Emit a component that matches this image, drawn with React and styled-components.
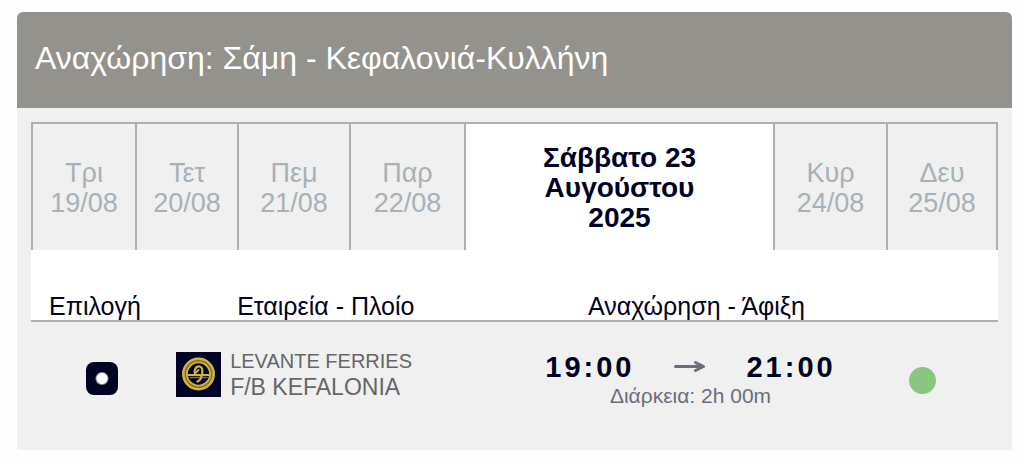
import React from "react";
import styled, { createGlobalStyle } from "styled-components";

const GlobalStyle = createGlobalStyle`
  * { box-sizing: border-box; }
  body {
    margin: 0;
    background: #fefefe;
    font-family: "Liberation Sans", Arial, sans-serif;
    color: #000323;
  }
`;

const Panel = styled.main`
  margin: 12px 12px 14px 17px;
  background: #f0f0f0;
  border-radius: 6px 6px 0 0;
  overflow: hidden;
`;

const Title = styled.h1`
  margin: 0;
  padding: 28px 18px 32px;
  background: #94928c;
  color: #fff;
  font-size: 32px;
  line-height: 36px;
  font-weight: 400;
`;

const Content = styled.div`
  padding: 14px 14px 0;
`;

const DayTabs = styled.nav`
  display: grid;
  grid-template-columns: 104fr 102fr 112fr 115fr 309fr 113fr 110fr;
  min-height: 128px;
  border-top: 2px solid #a8b0ba;
  border-left: 2px solid #a8b0ba;
`;

const DayTab = styled.button`
  display: flex;
  flex-direction: column;
  align-items: center;
  justify-content: center;
  padding: 2px 0 0;
  border: 0;
  border-right: 2px solid #a8b0ba;
  background: ${(p) => (p.$active ? "#fff" : "transparent")};
  color: ${(p) => (p.$active ? "#000323" : "#a8b0b8")};
  font-family: inherit;
  font-size: ${(p) => (p.$active ? "28px" : "27px")};
  line-height: 30px;
  font-weight: ${(p) => (p.$active ? 700 : 400)};
  cursor: pointer;
`;

const DayLabel = styled.span`
  max-width: 180px;
`;

const Schedule = styled.table`
  width: 100%;
  table-layout: fixed;
  border-collapse: separate;
  border-spacing: 0;
`;

const Col = styled.col`
  width: ${(p) => p.$width};
`;

const HeadCell = styled.th`
  padding: 42px 0 0 ${(p) => p.$indent || "0"};
  background: #fff;
  border-bottom: 2px solid #a8b0ba;
  font-size: 25px;
  line-height: 28px;
  font-weight: 400;
  text-align: ${(p) => p.$align || "left"};
  white-space: nowrap;
`;

const Cell = styled.td`
  height: 128px;
  padding: ${(p) => p.$top} 0 0;
  vertical-align: top;
  text-align: ${(p) => p.$align || "center"};
`;

const Choice = styled.input`
  appearance: none;
  display: block;
  width: 32px;
  height: 33px;
  margin: 0 auto;
  border-radius: 8px;
  background: radial-gradient(circle, #fff 0 5px, #000323 7px);
  cursor: pointer;
`;

const Company = styled.label`
  display: flex;
  align-items: center;
  gap: 9px;
  padding-left: 3px;
  color: #666;
  white-space: nowrap;
`;

const CompanyName = styled.span`
  display: block;
  font-size: 20px;
  line-height: 26px;
`;

const ShipName = styled.span`
  display: block;
  font-size: 23px;
  line-height: 26px;
`;

const Times = styled.div`
  display: flex;
  align-items: center;
  justify-content: center;
  gap: 40px;
  font-size: 29px;
  line-height: 30px;
  font-weight: 700;
  letter-spacing: 3px;
`;

const Duration = styled.div`
  color: #6c6c7c;
  font-size: 21px;
  line-height: 28px;
`;

const Availability = styled.span`
  display: inline-block;
  width: 27px;
  height: 27px;
  border-radius: 50%;
  background: #8ac77e;
`;

function CompanyLogo() {
  return (
    <svg width="45" height="45" viewBox="0 0 45 45" aria-hidden="true">
      <rect width="45" height="45" fill="#000323" />
      <g fill="none" stroke="#d2b33c" strokeLinecap="round">
        <circle cx="22.5" cy="22" r="13.8" stroke="#83702f" strokeWidth="5" />
        <circle cx="22.5" cy="22" r="15.2" strokeWidth="2.4" />
        <circle cx="22.5" cy="22" r="11.6" strokeWidth="1.8" />
        <path d="M12 23H33" strokeWidth="2.2" />
        <path d="M14 25.5H31" strokeWidth="1.4" stroke="#83702f" />
        <path d="M18.5 20C19 16.5 21 14.2 23.5 14.5C26.5 15 26.8 19 26 22.5C25.3 26 24 28.5 21.5 29.5" strokeWidth="2.2" />
        <path d="M22.5 18L18.5 22" strokeWidth="1.8" />
      </g>
    </svg>
  );
}

function Arrow() {
  return (
    <svg width="32" height="14" viewBox="0 0 32 14" aria-hidden="true">
      <path
        d="M1.5 6.5H29M21.5 2.5L29.5 6.5L21.5 10.5"
        fill="none"
        stroke="#6c6c7c"
        strokeWidth="3"
        strokeLinecap="round"
        strokeLinejoin="round"
      />
    </svg>
  );
}

const days = [
  ["Τρι", "19/08"],
  ["Τετ", "20/08"],
  ["Πεμ", "21/08"],
  ["Παρ", "22/08"],
  ["Σάββατο 23 Αυγούστου 2025"],
  ["Κυρ", "24/08"],
  ["Δευ", "25/08"],
];

export default function App() {
  return (
    <>
      <GlobalStyle />
      <Panel>
        <Title>Αναχώρηση: Σάμη - Κεφαλονιά-Κυλλήνη</Title>
        <Content>
          <DayTabs>
            {days.map((lines) => (
              <DayTab key={lines[0]} type="button" $active={lines.length === 1}>
                {lines.map((line) => (
                  <DayLabel key={line}>{line}</DayLabel>
                ))}
              </DayTab>
            ))}
          </DayTabs>
          <Schedule>
            <colgroup>
              <Col $width="14.7%" />
              <Col $width="37.4%" />
              <Col $width="32.2%" />
              <Col $width="15.7%" />
            </colgroup>
            <thead>
              <tr>
                <HeadCell $indent="18px">Επιλογή</HeadCell>
                <HeadCell $indent="64px">Εταιρεία - Πλοίο</HeadCell>
                <HeadCell $indent="12px" $align="center">Αναχώρηση - Άφιξη</HeadCell>
                <HeadCell />
              </tr>
            </thead>
            <tbody>
              <tr>
                <Cell $top="40px">
                  <Choice type="radio" name="sailing" id="sailing-1" defaultChecked />
                </Cell>
                <Cell $top="26px" $align="left">
                  <Company htmlFor="sailing-1">
                    <CompanyLogo />
                    <span>
                      <CompanyName>LEVANTE FERRIES</CompanyName>
                      <ShipName>F/B KEFALONIA</ShipName>
                    </span>
                  </Company>
                </Cell>
                <Cell $top="30px">
                  <Times>
                    <time>19:00</time>
                    <Arrow />
                    <time>21:00</time>
                  </Times>
                  <Duration>Διάρκεια: 2h 00m</Duration>
                </Cell>
                <Cell $top="45px">
                  <Availability />
                </Cell>
              </tr>
            </tbody>
          </Schedule>
        </Content>
      </Panel>
    </>
  );
}
